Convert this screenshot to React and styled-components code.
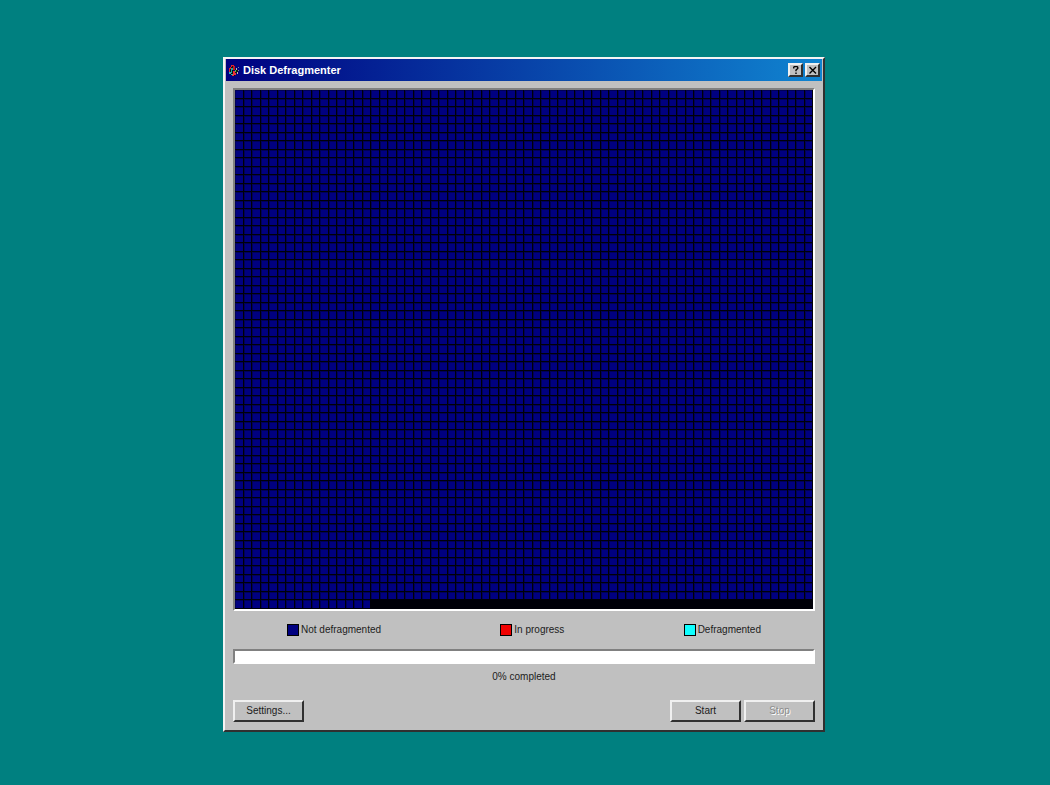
import React from "react";
import styled, { createGlobalStyle } from "styled-components";

const COLUMNS = 68;
const ROWS = 61;
const CLUSTERS = 4096;

const legend = [
  { label: "Not defragmented", color: "#000080" },
  { label: "In progress", color: "#f00000" },
  { label: "Defragmented", color: "#10ffff" },
];

const clusters = Array.from({ length: CLUSTERS }, (_, index) => index);

const App = () => {
  return (
    <>
      <GlobalStyle />
      <Desktop>
        <Window>
          <TitleBar>
            <DiskIcon />
            <Title>Disk Defragmenter</Title>
            <TitleButton type="button" aria-label="Help">
              <HelpIcon />
            </TitleButton>
            <TitleButton type="button" aria-label="Close">
              <CloseIcon />
            </TitleButton>
          </TitleBar>
          <Content>
            <ClusterFrame>
              <ClusterMap>
                {clusters.map((index) => (
                  <Cluster key={index} />
                ))}
              </ClusterMap>
            </ClusterFrame>
            <Legend>
              {legend.map(({ label, color }) => (
                <LegendItem key={label}>
                  <Swatch $color={color} />
                  {label}
                </LegendItem>
              ))}
            </Legend>
            <ProgressBar id="progress" value={0} max={100} />
            <ProgressLabel htmlFor="progress">0% completed</ProgressLabel>
            <Actions>
              <Button type="button">Settings...</Button>
              <ActionGroup>
                <Button type="button">Start</Button>
                <Button type="button" disabled>
                  Stop
                </Button>
              </ActionGroup>
            </Actions>
          </Content>
        </Window>
      </Desktop>
    </>
  );
};

export default App;

const DiskIcon = () => (
  <IconSvg viewBox="0 0 13 13" aria-hidden="true">
    <path d="M3 2h3v1h1v3H5v4h2v2H4v-1H2V9H1V4h1V3h1z" fill="#111" />
    <path d="M3 1h3v1H4v1H3v2H2v3H1V4h1V3h1z" fill="#e02030" />
    <path d="M3 4h2v2H4v3H3z" fill="#20a8a0" />
    <path d="M5 2h2v4H5z" fill="#c01828" />
    <path d="M1 8h2v2h2v1H3v-1H1z" fill="#30b0b0" />
    <path d="M5 7h2v2h1v2H6v1H4v-1h1z" fill="#f03038" />
    <path d="M7 5h1V4h1v2h1v2H9v1H7z" fill="#181818" />
    <path d="M7 6h1v2H7z" fill="#50c040" />
    <path d="M8 4h1v2H8zM9 8h1v2H9z" fill="#c0b8b0" />
    <path d="M10 3h1v1h-1zM10 6h1v1h-1z" fill="#808898" />
  </IconSvg>
);

const HelpIcon = () => (
  <GlyphSvg viewBox="0 0 8 8" aria-hidden="true">
    <path
      d="M1.75 2.5V1.25L2.5 .5H5L5.75 1.25V2.5L4 4V5.25M4 6.5V8"
      fill="none"
      stroke="#000"
      strokeWidth="1.4"
    />
  </GlyphSvg>
);

const CloseIcon = () => (
  <GlyphSvg viewBox="0 0 8 8" aria-hidden="true">
    <path d="M.5 1L7 7.5M7 1L.5 7.5" stroke="#000" strokeWidth="1.4" />
  </GlyphSvg>
);

const GlobalStyle = createGlobalStyle`
  * {
    box-sizing: border-box;
  }
  body {
    margin: 0;
    background: #008080;
  }
`;

const Desktop = styled.main`
  min-height: 100vh;
  padding: 4px 2px 0 0;
  display: flex;
  align-items: center;
  justify-content: center;
  font-family: "Liberation Sans", Arial, sans-serif;
  font-size: 10px;
  line-height: 12px;
  color: #202020;
`;

const Window = styled.section`
  width: 100%;
  max-width: 602px;
  background: #c0c0c0;
  border: 2px solid;
  border-color: #f4f4f4 #303030 #303030 #f4f4f4;
`;

const TitleBar = styled.header`
  display: flex;
  align-items: center;
  gap: 2px;
  height: 22px;
  padding: 0 2px;
  margin: 0 1px;
  background: linear-gradient(to right, #000080, #1084d0);
`;

const Title = styled.h1`
  flex: 1;
  margin: 0;
  font-size: 11px;
  font-weight: 700;
  line-height: 12px;
  color: white;
`;

const raised = `
  background: #c0c0c0;
  border: 2px solid;
  border-color: #f0f0f0 #303030 #303030 #f0f0f0;
`;

const TitleButton = styled.button`
  ${raised}
  display: flex;
  align-items: center;
  justify-content: center;
  width: 15px;
  height: 14px;
  padding: 0;
`;

const Content = styled.div`
  display: flex;
  flex-direction: column;
  padding: 7px 8px 8px;
`;

const sunken = `
  border: 2px solid;
  border-color: #808080 #ffffff #ffffff #808080;
`;

const ClusterFrame = styled.div`
  ${sunken}
  background: #000008;
`;

const ClusterMap = styled.div`
  display: grid;
  grid-template-columns: repeat(${COLUMNS}, 1fr);
  grid-template-rows: repeat(${ROWS}, 1fr);
  aspect-ratio: ${COLUMNS} / ${ROWS};
`;

const Cluster = styled.div`
  background: #000080;
  border: solid #000008;
  border-width: 0 1px 1px 0;
  box-shadow: inset 1px 1px #000058;
`;

const Legend = styled.ul`
  display: flex;
  justify-content: space-between;
  margin: 13px 0;
  padding: 0 54px;
  list-style: none;
`;

const LegendItem = styled.li`
  display: flex;
  align-items: center;
  gap: 2px;
`;

const Swatch = styled.span`
  width: 12px;
  height: 12px;
  border: 1px solid #000000;
  background: ${({ $color }) => $color};
`;

const ProgressBar = styled.progress`
  ${sunken}
  appearance: none;
  display: block;
  width: 100%;
  height: 15px;
  background: white;
  &::-webkit-progress-bar {
    background: white;
  }
  &::-webkit-progress-value {
    background: #000080;
  }
`;

const ProgressLabel = styled.label`
  margin: 7px 0 17px;
  text-align: center;
`;

const Actions = styled.div`
  display: flex;
  justify-content: space-between;
`;

const ActionGroup = styled.div`
  display: flex;
  gap: 3px;
`;

const Button = styled.button`
  ${raised}
  width: 71px;
  height: 22px;
  padding: 0;
  font: inherit;
  color: inherit;
  &:disabled {
    color: #8c8c8c;
    text-shadow: 1px 1px #ffffff;
  }
`;

const IconSvg = styled.svg`
  width: 13px;
  height: 13px;
`;

const GlyphSvg = styled.svg`
  width: 8px;
  height: 8px;
`;
